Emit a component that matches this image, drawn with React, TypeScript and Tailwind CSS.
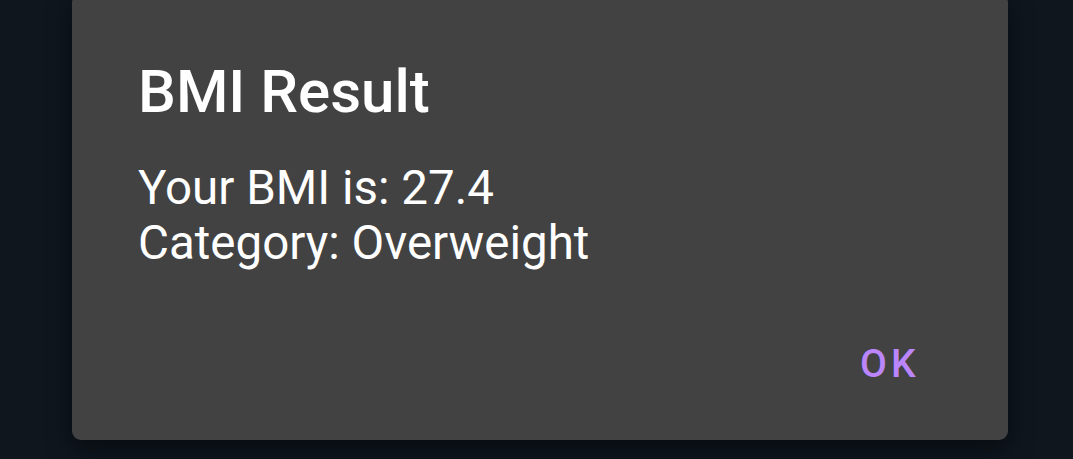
export default function App() {
  return (
    <div className="flex h-[459px] w-full overflow-hidden bg-[#0f161e] font-['Roboto',sans-serif]">
      <div className="-mt-[6px] ml-[72px] flex h-[446px] w-[936px] flex-col rounded-[9px] bg-[#424242] pl-[66px] pr-[88px] pt-[63px] shadow-[0_8px_24px_rgba(0,0,0,0.5)]">
        <h1 className="text-[60px] font-medium leading-[70px] text-white">BMI Result</h1>
        <p className="mt-[34px] text-[47.5px] leading-[55px] text-white">
          Your BMI is: 27.4
          <br />
          Category: Overweight
        </p>
        <div className="mt-auto mb-[54px] flex justify-end">
          <button className="text-[39px] font-medium uppercase leading-[44px] tracking-[0.11em] text-[#bb86fc]">
            OK
          </button>
        </div>
      </div>
    </div>
  );
}
